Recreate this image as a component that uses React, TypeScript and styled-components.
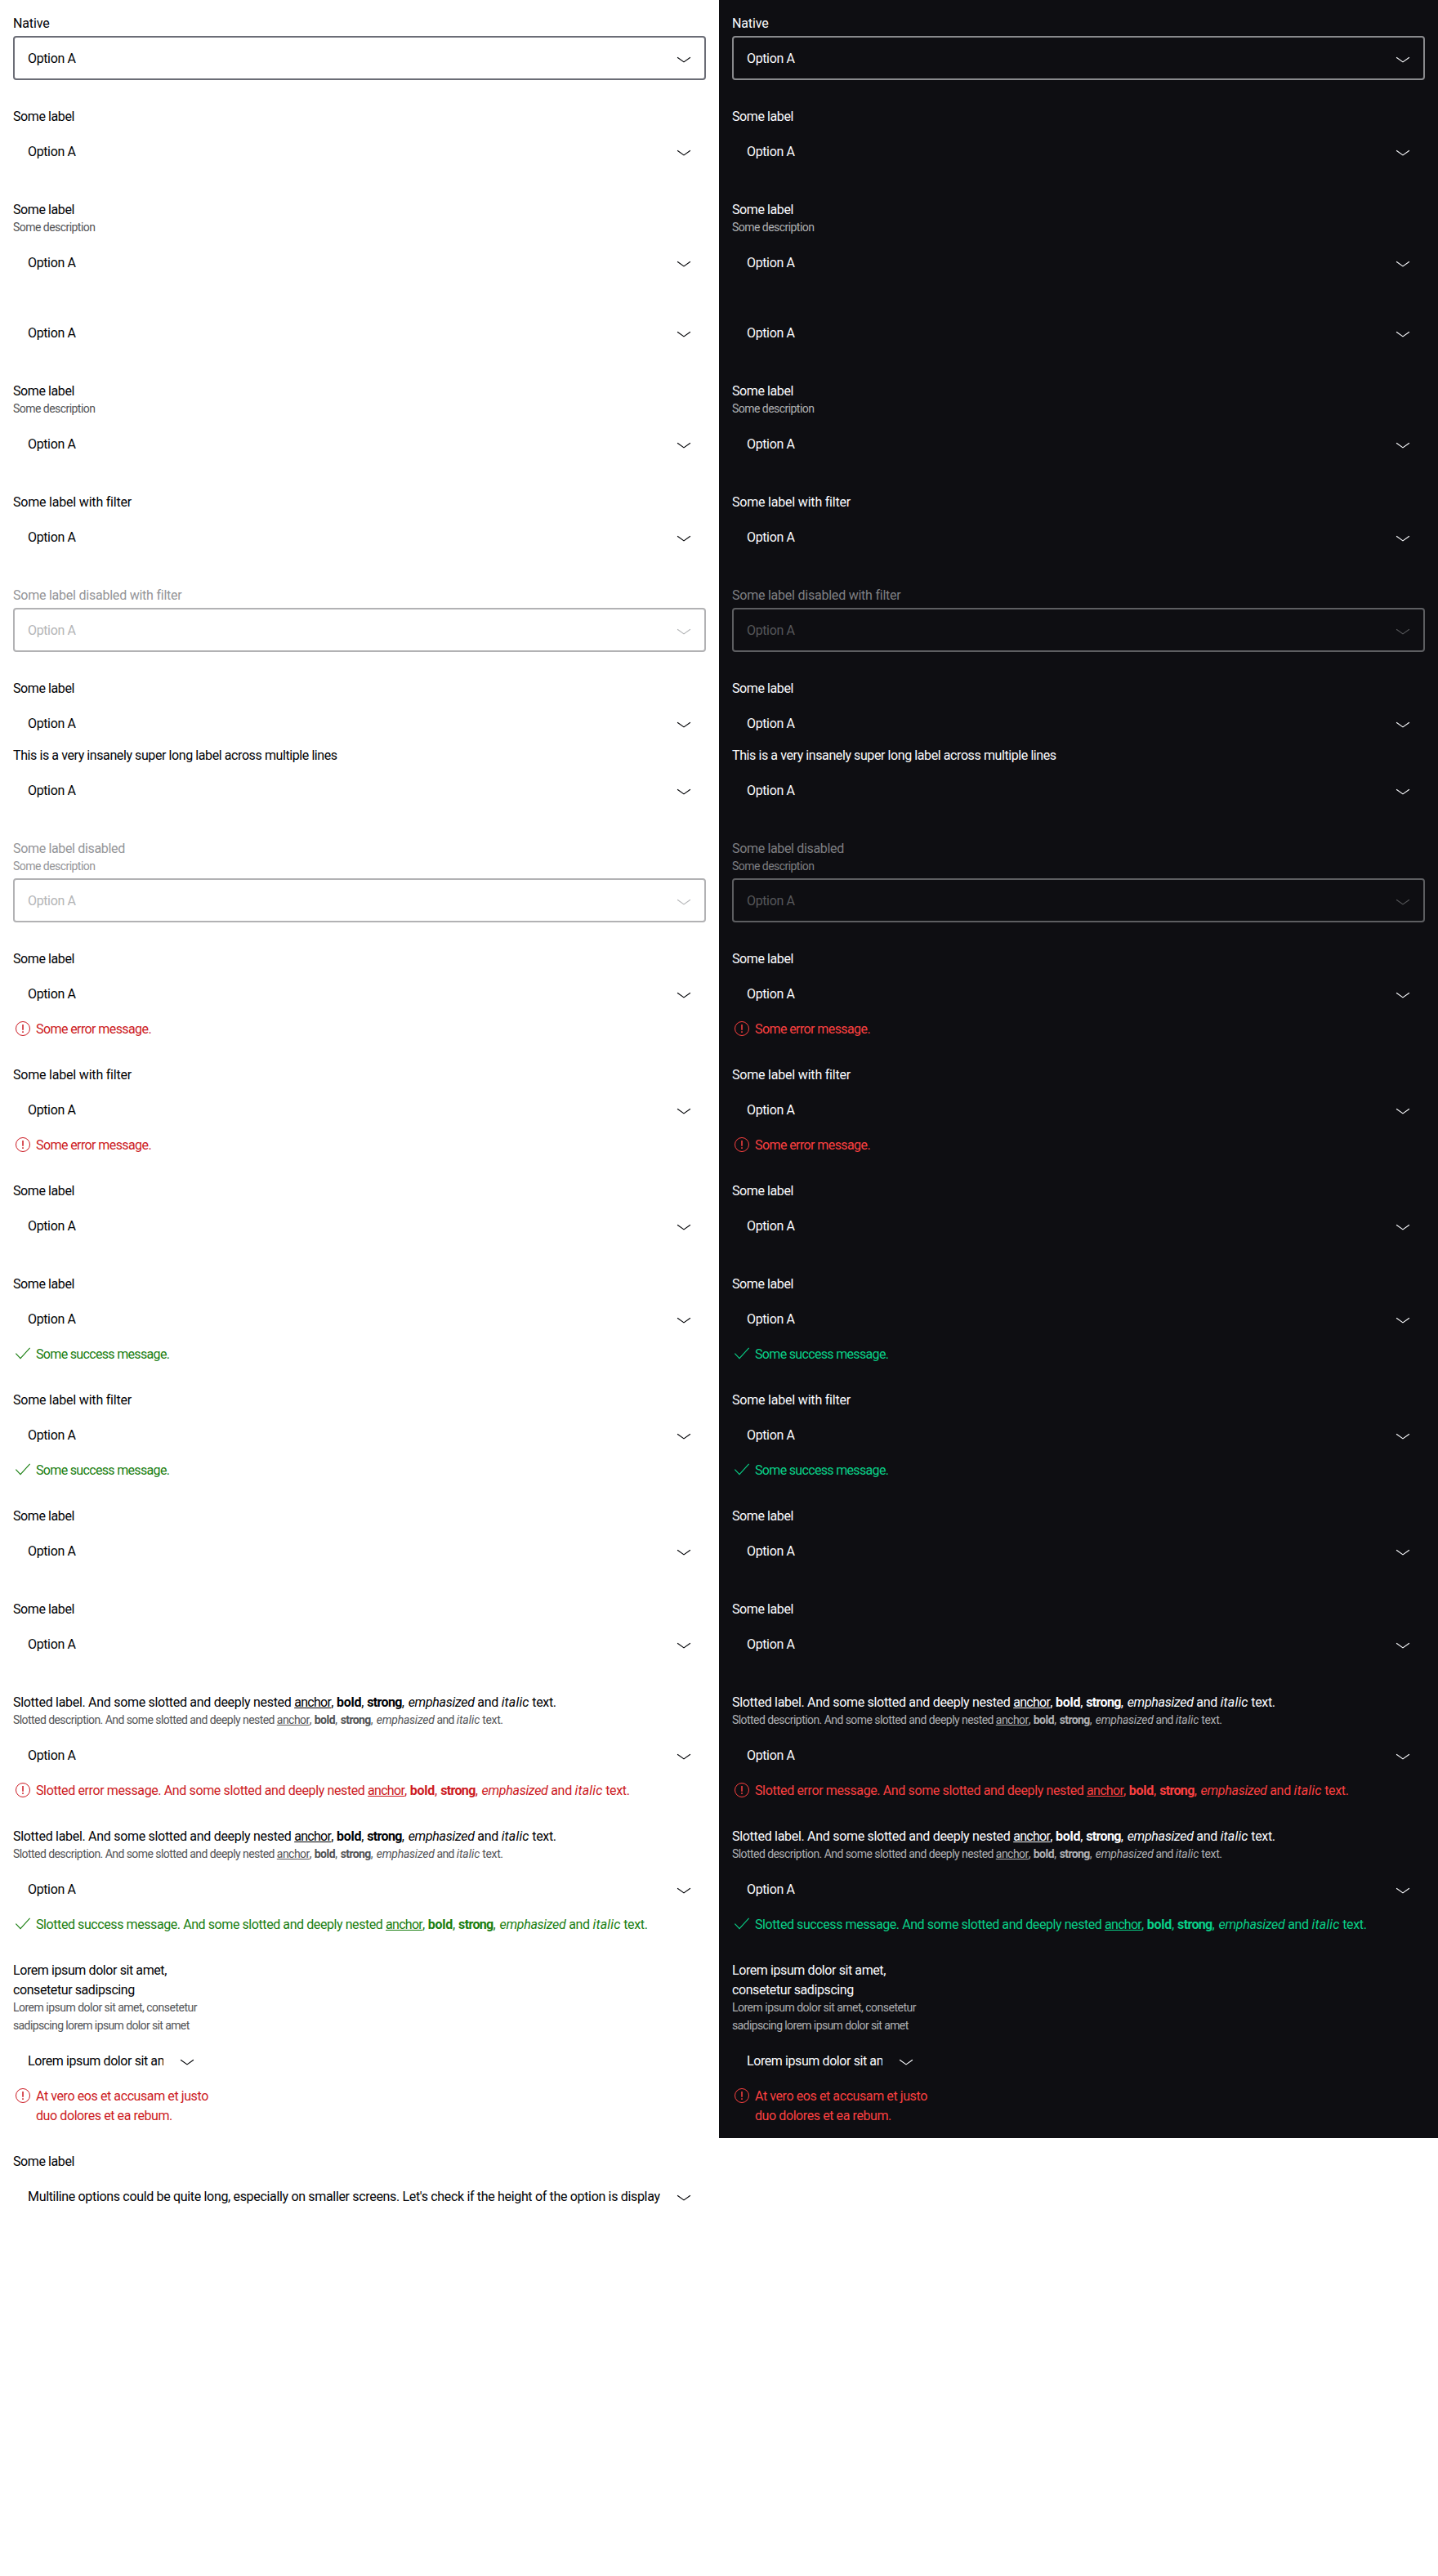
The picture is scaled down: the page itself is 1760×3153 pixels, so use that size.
import React from 'react';
import styled, { createGlobalStyle, ThemeProvider } from 'styled-components';

const palettes = {
  light: {
    background: '#ffffff',
    primary: '#010205',
    secondary: '#535457',
    border: '#6b6d76',
    disabled: '#949598',
    disabledValue: '#b4b5b7',
    disabledBorder: '#b2b2b4',
    error: '#cc1922',
    success: '#197e10',
  },
  dark: {
    background: '#0e0e12',
    primary: '#fbfcff',
    secondary: '#afb0b3',
    border: '#88898c',
    disabled: '#7e7f82',
    disabledValue: '#56575a',
    disabledBorder: '#5d5e61',
    error: '#fc4040',
    success: '#09d087',
  },
};

type Palette = (typeof palettes)['light'];
type State = 'error' | 'success';

declare module 'styled-components' {
  export interface DefaultTheme extends Palette {}
}

const GlobalStyle = createGlobalStyle`
  body {
    margin: 0;
    background: #ffffff;
    font-family: Roboto, 'Liberation Sans', sans-serif;
  }
`;

const Page = styled.main`
  display: grid;
  grid-template-columns: 880px 880px;
  min-height: 3153px;
  align-content: start;
`;

const Panel = styled.section`
  box-sizing: border-box;
  display: flex;
  flex-direction: column;
  padding: 16px;
  background: ${(p) => p.theme.background};
  color: ${(p) => p.theme.primary};
`;

const Field = styled.div<{ $width?: number; $tight?: boolean }>`
  display: flex;
  flex-direction: column;
  width: ${(p) => (p.$width ? `${p.$width}px` : '100%')};
  margin-bottom: ${(p) => (p.$tight ? 0 : 32)}px;

  &:last-child {
    margin-bottom: 0;
  }
`;

const Label = styled.label<{ $disabled?: boolean }>`
  font-size: 16px;
  line-height: 24px;
  white-space: nowrap;
  color: ${(p) => (p.$disabled ? p.theme.disabled : 'inherit')};
`;

const Description = styled.span<{ $disabled?: boolean }>`
  font-size: 14px;
  line-height: 21.8px;
  white-space: nowrap;
  color: ${(p) => (p.$disabled ? p.theme.disabled : p.theme.secondary)};
`;

const SelectBox = styled.div<{ $outlined?: boolean; $disabled?: boolean; $flush?: boolean }>`
  box-sizing: border-box;
  display: flex;
  align-items: center;
  gap: 17px;
  height: 54px;
  margin-top: ${(p) => (p.$flush ? 0 : 4)}px;
  padding: 0 13px 0 16px;
  border: 2px solid
    ${(p) => (p.$disabled ? p.theme.disabledBorder : p.$outlined ? p.theme.border : 'transparent')};
  border-radius: 4px;
  color: ${(p) => (p.$disabled ? p.theme.disabledValue : 'inherit')};
`;

const Value = styled.span`
  flex: 1;
  min-width: 0;
  overflow: hidden;
  white-space: nowrap;
  font-size: 16px;
  line-height: 24px;
`;

const Message = styled.div<{ $state: State }>`
  display: flex;
  align-items: flex-start;
  gap: 4px;
  margin-top: 4px;
  font-size: 16px;
  line-height: 24px;
  white-space: nowrap;
  color: ${(p) => p.theme[p.$state]};
`;

const Icon = styled.svg`
  flex: none;
  display: block;
  width: 24px;
  height: 24px;
  fill: none;
  stroke: currentColor;
`;

const Run = styled.span<{ $track: number; $small?: boolean }>`
  letter-spacing: ${(p) => p.$track}px;
  line-height: 1;
  vertical-align: ${(p) => (p.$small ? '0' : '-1px')};
`;

const Anchor = styled.a<{ $small?: boolean }>`
  color: inherit;
  text-decoration: underline;
  text-decoration-thickness: 1px;
  text-decoration-skip-ink: none;
  text-underline-offset: ${(p) => (p.$small ? 1 : 2)}px;
`;

const Line = styled.span`
  display: block;
`;

/* Letter spacing of each phrase, in pixels. */
const tracking: Record<string, number> = {
  Native: -0.15,
  'Option A': -0.37,
  'Some label': -0.41,
  'Some label with filter': -0.2,
  'Some label disabled with filter': -0.23,
  'Some label disabled': -0.34,
  'Some error message.': -0.59,
  'Some success message.': -0.67,
  'Slotted label.': -0.3,
  'Slotted error message.': -0.38,
  'Slotted success message.': -0.42,
};

const smallTracking: Record<string, number> = {
  'Some description': -0.54,
  'Lorem ipsum dolor sit amet, consetetur': -0.51,
  'sadipscing lorem ipsum dolor sit amet': -0.61,
};

type TextProps = { children: string; track?: number; small?: boolean };

const T = ({ children, track, small }: TextProps) => (
  <Run $small={small} $track={track ?? (small ? smallTracking : tracking)[children] ?? -0.41}>
    {children}
  </Run>
);

const Chevron = () => (
  <Icon viewBox="0 0 24 24">
    <path d="M4.1 11.3L12 16.9L19.9 11.3" strokeWidth="1.15" />
  </Icon>
);

const StateIcon = ({ state }: { state: State }) => (
  <Icon viewBox="0 0 24 24">
    {state === 'error' ? (
      <>
        <circle cx="12" cy="12" r="8.5" />
        <path d="M12 7v6.8M12 15.3v1.7" strokeWidth="1.5" />
      </>
    ) : (
      <path d="M3.4 11.7L9 17.7L20.6 4.8" strokeWidth="1.1" />
    )}
  </Icon>
);

type FieldProps = {
  label?: React.ReactNode;
  description?: React.ReactNode;
  message?: React.ReactNode;
  state?: State;
  value?: string;
  valueTrack?: number;
  outlined?: boolean;
  disabled?: boolean;
  tight?: boolean;
  width?: number;
};

const text = (node: React.ReactNode, small?: boolean) =>
  typeof node === 'string' ? <T small={small}>{node}</T> : node;

const SelectField = ({
  label,
  description,
  message,
  state,
  value = 'Option A',
  valueTrack,
  outlined,
  disabled,
  tight,
  width,
}: FieldProps) => (
  <Field $width={width} $tight={tight}>
    {label && <Label $disabled={disabled}>{text(label)}</Label>}
    {description && <Description $disabled={disabled}>{text(description, true)}</Description>}
    <SelectBox $outlined={outlined} $disabled={disabled} $flush={!label}>
      <Value>
        <T track={valueTrack}>{value}</T>
      </Value>
      <Chevron />
    </SelectBox>
    {state && message && (
      <Message $state={state}>
        <StateIcon state={state} />
        <span>{text(message)}</span>
      </Message>
    )}
  </Field>
);

const Slotted = ({ lead }: { lead: string }) => (
  <>
    <T track={tracking[lead]}>{`${lead} And some slotted and deeply nested `}</T>
    <Anchor href="#">
      <T track={-0.71}>anchor</T>
    </Anchor>
    <T track={-0.2}>{', '}</T>
    <b>
      <T track={-0.27}>bold</T>
    </b>
    <T track={0}>{', '}</T>
    <strong>
      <T track={-0.65}>strong</T>
    </strong>
    <T track={0.4}>{', '}</T>
    <em>
      <T track={-0.29}>emphasized</T>
    </em>
    <T track={-0.3}>{' and '}</T>
    <i>
      <T track={0.17}>italic</T>
    </i>
    <T track={-0.35}>{' text.'}</T>
  </>
);

const SlottedDescription = () => (
  <>
    <T small track={-0.56}>{'Slotted description. And some slotted and deeply nested '}</T>
    <Anchor href="#" $small>
      <T small track={-0.52}>anchor</T>
    </Anchor>
    <T small track={-0.2}>{', '}</T>
    <b>
      <T small track={-0.44}>bold</T>
    </b>
    <T small track={0.1}>{', '}</T>
    <strong>
      <T small track={-0.6}>strong</T>
    </strong>
    <T small track={0.4}>{', '}</T>
    <em>
      <T small track={-0.24}>emphasized</T>
    </em>
    <T small track={-0.64}>{' and '}</T>
    <i>
      <T small track={-0.06}>italic</T>
    </i>
    <T small track={-0.37}>{' text.'}</T>
  </>
);

const Fields = () => (
  <>
    <SelectField label="Native" outlined />
    <SelectField label="Some label" />
    <SelectField label="Some label" description="Some description" />
    <SelectField />
    <SelectField label="Some label" description="Some description" />
    <SelectField label="Some label with filter" />
    <SelectField label="Some label disabled with filter" disabled />
    <SelectField label="Some label" tight />
    <SelectField label="This is a very insanely super long label across multiple lines" />
    <SelectField label="Some label disabled" description="Some description" disabled />
    <SelectField label="Some label" state="error" message="Some error message." />
    <SelectField label="Some label with filter" state="error" message="Some error message." />
    <SelectField label="Some label" />
    <SelectField label="Some label" state="success" message="Some success message." />
    <SelectField label="Some label with filter" state="success" message="Some success message." />
    <SelectField label="Some label" />
    <SelectField label="Some label" />
    <SelectField
      label={<Slotted lead="Slotted label." />}
      description={<SlottedDescription />}
      state="error"
      message={<Slotted lead="Slotted error message." />}
    />
    <SelectField
      label={<Slotted lead="Slotted label." />}
      description={<SlottedDescription />}
      state="success"
      message={<Slotted lead="Slotted success message." />}
    />
    <SelectField
      width={240}
      label={
        <>
          <Line><T>Lorem ipsum dolor sit amet,</T></Line>
          <Line><T>consetetur sadipscing</T></Line>
        </>
      }
      description={
        <>
          <Line><T small>Lorem ipsum dolor sit amet, consetetur</T></Line>
          <Line><T small>sadipscing lorem ipsum dolor sit amet</T></Line>
        </>
      }
      value="Lorem ipsum dolor sit amet, consetetur sadipscing"
      state="error"
      message={
        <>
          <Line><T>At vero eos et accusam et justo</T></Line>
          <Line><T>duo dolores et ea rebum.</T></Line>
        </>
      }
    />
  </>
);

const App = () => (
  <Page>
    <GlobalStyle />
    <ThemeProvider theme={palettes.light}>
      <Panel>
        <Fields />
      </Panel>
    </ThemeProvider>
    <ThemeProvider theme={palettes.dark}>
      <Panel>
        <Fields />
      </Panel>
    </ThemeProvider>
    <ThemeProvider theme={palettes.light}>
      <Panel>
        <SelectField
          label="Some label"
          valueTrack={-0.33}
          value="Multiline options could be quite long, especially on smaller screens. Let's check if the height of the option is displayed correctly"
        />
      </Panel>
    </ThemeProvider>
  </Page>
);

export default App;
